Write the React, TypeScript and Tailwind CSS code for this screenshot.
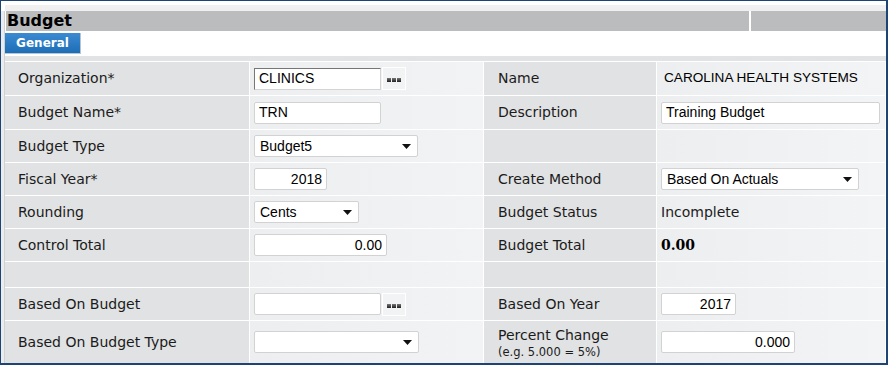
import React from "react";

const LBL = "font-['DejaVu_Sans',Verdana,sans-serif] text-[14px] text-[#1b1b1b]";
const INP = "font-['Liberation_Sans',Arial,sans-serif] text-[14px] text-black";

function Dots() {
  return (
    <div className="ml-[1px] w-[24px] h-[23px] bg-[#f2f3f4] border border-white flex items-center justify-center gap-[1px] pt-[3px]">
      {[0, 1, 2].map((i) => (
        <span key={i} className="block w-[4px] h-[4px] bg-gradient-to-b from-[#777] to-[#222]" />
      ))}
    </div>
  );
}

function TextBox({ w, value, right, inset }: { w: number; value?: string; right?: boolean; inset?: boolean }) {
  return (
    <div
      style={{ width: w }}
      className={`h-[22px] bg-white flex items-center px-[4px] ${INP} ${right ? "justify-end" : ""} ${
        inset
          ? "border border-t-[#767676] border-l-[#767676] border-r-[#d4d4d4] border-b-[#d4d4d4]"
          : "border border-[#d2d2d2] rounded-[2px]"
      }`}
    >
      {value}
    </div>
  );
}

function Select({ w, value }: { w: number; value?: string }) {
  return (
    <div
      style={{ width: w }}
      className={`h-[22px] bg-white border border-[#d2d2d2] rounded-[2px] flex items-center justify-between pl-[5px] pr-[6px] ${INP}`}
    >
      <span>{value}</span>
      <svg width="9" height="5" viewBox="0 0 9 5" className="mt-[1px]">
        <path d="M0 0 H9 L4.5 5 Z" fill="#111" />
      </svg>
    </div>
  );
}

type Cell = React.ReactNode;

function Row({ h, a, b, c, d }: { h: number; a?: Cell; b?: Cell; c?: Cell; d?: Cell }) {
  return (
    <>
      <div style={{ height: h }} className={`bg-[#e1e2e3] flex items-center pl-[13px] ${LBL}`}>{a}</div>
      <div style={{ height: h }} className="bg-gradient-to-r from-[#eceeef] to-[#f2f3f4] flex items-center pl-[4px]">{b}</div>
      <div style={{ height: h }} className={`bg-[#e1e2e3] flex items-center pl-[14px] ${LBL}`}>{c}</div>
      <div style={{ height: h }} className="bg-gradient-to-r from-[#eceeef] to-[#f3f4f5] flex items-center pl-[4px]">{d}</div>
    </>
  );
}

export default function App() {
  return (
    <div className="w-[888px] h-[365px] bg-white border-l border-t border-r-2 border-b-2 border-[#1d4474] flex overflow-hidden">
      <div className="w-[4px] flex flex-col">
        <div className="h-[10px] bg-white" />
        <div className="flex-1 bg-[#ebeced] border-r border-[#d0d1d2]" />
      </div>
      <div className="flex-1 flex flex-col">
        <div className="h-[4px] bg-white" />
        <div className="h-[6px] bg-[#f0f0f0]" />
        <div className="h-[20px] flex pl-[1px]">
          <div className="w-[743px] bg-[#bbbcbd] flex items-center pl-[1px] font-['DejaVu_Sans',Tahoma,sans-serif] font-bold text-[16px] text-black leading-none">
            Budget
          </div>
          <div className="w-[2px] bg-white" />
          <div className="flex-1 bg-[#bbbcbd]" />
        </div>
        <div className="h-[2px]" />
        <div className="h-[21px] flex">
          <div className="w-[76px] h-[21px] bg-gradient-to-b from-[#3b8bd2] to-[#1c6db7] border-r border-b border-[#b8c4d0] flex items-center justify-center font-['DejaVu_Sans',Verdana,sans-serif] font-bold text-[12px] text-white">
            General
          </div>
        </div>
        <div className="h-[2px]" />
        <div className="h-[5px] bg-[#e1e3e4]" />
        <div className="grid grid-cols-[244px_233px_172px_228px] gap-px bg-white pt-px">
          <Row
            h={33}
            a="Organization*"
            b={
              <div className="flex items-center">
                <TextBox w={127} value="CLINICS" inset />
                <Dots />
              </div>
            }
            c="Name"
            d={<span className="font-['Liberation_Sans',Arial,sans-serif] text-[13.6px] text-black pl-[3px]">CAROLINA HEALTH SYSTEMS</span>}
          />
          <Row
            h={33}
            a="Budget Name*"
            b={<TextBox w={127} value="TRN" />}
            c="Description"
            d={<TextBox w={219} value="Training Budget" />}
          />
          <Row h={32} a="Budget Type" b={<Select w={164} value="Budget5" />} />
          <Row
            h={32}
            a="Fiscal Year*"
            b={<TextBox w={73} value="2018" right />}
            c="Create Method"
            d={<Select w={198} value="Based On Actuals" />}
          />
          <Row
            h={32}
            a="Rounding"
            b={<Select w={105} value="Cents" />}
            c="Budget Status"
            d={<span className={LBL}>Incomplete</span>}
          />
          <Row
            h={32}
            a="Control Total"
            b={<TextBox w={133} value="0.00" right />}
            c="Budget Total"
            d={<span className="font-['DejaVu_Serif',Georgia,serif] font-bold text-[14px] text-black">0.00</span>}
          />
          <Row h={25} />
          <Row
            h={32}
            a="Based On Budget"
            b={
              <div className="flex items-center">
                <TextBox w={127} />
                <Dots />
              </div>
            }
            c="Based On Year"
            d={<TextBox w={75} value="2017" right />}
          />
          <Row
            h={42}
            a="Based On Budget Type"
            b={<Select w={165} />}
            c={
              <div className="flex flex-col leading-tight pt-[2px]">
                <span>Percent Change</span>
                <span className="text-[11.5px] mt-[1px]">(e.g. 5.000 = 5%)</span>
              </div>
            }
            d={<TextBox w={134} value="0.000" right />}
          />
        </div>
      </div>
    </div>
  );
}
